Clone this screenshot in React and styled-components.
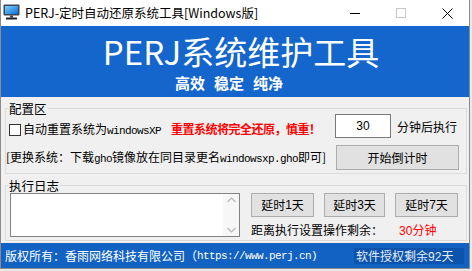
import React from "react";
import styled, { createGlobalStyle } from "styled-components";

const GlobalStyle = createGlobalStyle`
  html, body { margin: 0; padding: 0; background: #e9e9e9; }
  body {
    font-family: "Noto Sans CJK SC", "Noto Sans", sans-serif;
    font-size: 12px;
    color: #000;
  }
  * { box-sizing: border-box; }
`;

const Window = styled.div`
  width: 470px;
  height: 269px;
  border: 1px solid #8c8c8c;
  border-top: none;
  background: #f0f0f0;
  display: flex;
  flex-direction: column;
  overflow: hidden;
`;

const TitleBar = styled.div`
  height: 26px;
  flex: none;
  display: flex;
  align-items: center;
  background: #fff;
  padding-left: 2px;
`;

const TitleIcon = styled.svg`
  width: 17px;
  height: 16px;
  margin-top: -2px;
  flex: none;
`;

const TitleText = styled.span`
  margin-left: 5px;
  font-size: 12.5px;
  line-height: 16px;
  white-space: nowrap;
`;

const Controls = styled.div`
  margin-left: auto;
  margin-right: -1px;
  display: flex;
  height: 100%;
`;

const ControlBtn = styled.div`
  width: 46px;
  height: 26px;
  display: flex;
  align-items: center;
  justify-content: center;
`;

const Header = styled.div`
  height: 71px;
  flex: none;
  background: #1466cc;
  color: #fff;
  display: flex;
  flex-direction: column;
  align-items: center;
`;

const BigTitle = styled.div`
  margin-top: 7px;
  padding-left: 12px;
  font-size: 33px;
  line-height: 36px;
  white-space: nowrap;
`;

const Slogan = styled.div`
  margin-top: 5px;
  padding-right: 12px;
  display: flex;
  gap: 9px;
  font-size: 15px;
  font-weight: 700;
  line-height: 18px;
`;

const Body = styled.div`
  padding: 0 2px 0 4px;
`;

const Group = styled.div`
  position: relative;
  margin-top: 11px;
  height: ${p => p.h}px;
  border: 1px solid #dcdcdc;
  padding: ${p => p.pad};
`;

const Legend = styled.span`
  position: absolute;
  top: -8px;
  left: 2px;
  padding: 0 1px;
  background: #f0f0f0;
  font-size: 12.5px;
  line-height: 15px;
`;

const Row = styled.div`
  display: flex;
  align-items: center;
  height: ${p => p.h}px;
  margin-top: ${p => p.mt || 0}px;
`;

const CheckBox = styled.span`
  width: 12px;
  height: 12px;
  margin: 8px 0 0 3px;
  border: 1px solid #333;
  background: #fff;
  flex: none;
`;

const Label = styled.span`
  line-height: 14px;
  white-space: nowrap;
  margin-top: ${p => p.mt || 0}px;
  margin-left: ${p => p.ml || 0}px;
  color: ${p => p.red ? "#ff0000" : "#000"};
  font-weight: ${p => p.bold ? 700 : 400};
  letter-spacing: ${p => p.bold ? "-0.5px" : "0"};
`;

const Mono = styled.span`
  font-family: "Liberation Mono", monospace;
  font-size: 11px;
  letter-spacing: -0.6px;
`;

const NumberBox = styled.div`
  margin-left: auto;
  width: 56px;
  height: 24px;
  border: 1px solid #7a7a7a;
  background: #fff;
  display: flex;
  align-items: center;
  justify-content: center;
  font-family: "Liberation Sans", Arial, sans-serif;
  font-size: 12px;
`;

const Button = styled.div`
  width: ${p => p.w}px;
  height: ${p => p.h || 24}px;
  margin-left: ${p => p.ml || "0"};
  border: 1px solid #adadad;
  background: #e1e1e1;
  display: flex;
  align-items: center;
  justify-content: center;
  line-height: 14px;
  flex: none;
`;

const LogBox = styled.div`
  width: 230px;
  height: 44px;
  border: 1px solid #828282;
  background: #fff;
  display: flex;
  flex: none;
`;

const LogText = styled.textarea`
  flex: 1;
  border: none;
  outline: none;
  resize: none;
  overflow: hidden;
  background: transparent;
  font: inherit;
`;

const ScrollBar = styled.div`
  width: 16px;
  background: #f7f7f7;
  display: flex;
  flex-direction: column;
  justify-content: space-between;
  align-items: center;
  padding: 3px 0;
`;

const Side = styled.div`
  margin-left: 11px;
  display: flex;
  flex-direction: column;
`;

const ButtonRow = styled.div`
  display: flex;
  gap: 10px;
`;

const CountRow = styled.div`
  display: flex;
  margin-top: 6px;
`;

const Footer = styled.div`
  margin-top: 2px;
  height: 25px;
  flex: none;
  background: #1262c4;
  color: #fff;
  display: flex;
  align-items: center;
  padding-left: 4px;
  white-space: nowrap;
`;

const License = styled.div`
  margin-left: auto;
  margin-right: 5px;
  width: 110px;
  height: 16px;
  line-height: 16px;
  padding-left: 2px;
  background: #0c53ad;
  color: #e6ecf6;
`;

const Digits = styled.span`
  font-family: "Liberation Sans", Arial, sans-serif;
`;

function MonitorIcon() {
  return (
    <TitleIcon viewBox="0 0 17 16">
      <defs>
        <linearGradient id="scr" x1="0" y1="0" x2="1" y2="1">
          <stop offset="0" stopColor="#7fd0ff" />
          <stop offset="1" stopColor="#0a6fd8" />
        </linearGradient>
      </defs>
      <rect x="0.5" y="0.5" width="16" height="11" rx="1" fill="#3d4652" />
      <rect x="2" y="2" width="13" height="8" fill="url(#scr)" />
      <rect x="7" y="11.5" width="3" height="2" fill="#3d4652" />
      <rect x="3" y="13.5" width="11" height="2" rx="0.5" fill="#1f2329" />
    </TitleIcon>
  );
}

function Chevron({ up }) {
  return (
    <svg width="9" height="6" viewBox="0 0 9 6">
      <polyline
        points={up ? "0.5,5 4.5,1 8.5,5" : "0.5,1 4.5,5 8.5,1"}
        fill="none"
        stroke="#b8b8b8"
        strokeWidth="1.2"
      />
    </svg>
  );
}

export default function App() {
  return (
    <>
      <GlobalStyle />
      <Window>
        <TitleBar>
          <MonitorIcon />
          <TitleText>PERJ-定时自动还原系统工具[Windows版]</TitleText>
          <Controls>
            <ControlBtn>
              <svg width="10" height="10" viewBox="0 0 10 10"><line x1="0" y1="5.5" x2="10" y2="5.5" stroke="#000" /></svg>
            </ControlBtn>
            <ControlBtn>
              <svg width="10" height="10" viewBox="0 0 10 10"><rect x="0.5" y="0.5" width="9" height="9" fill="none" stroke="#c8c8c8" /></svg>
            </ControlBtn>
            <ControlBtn>
              <svg width="11" height="11" viewBox="0 0 11 11"><path d="M0.5 0.5 L10.5 10.5 M10.5 0.5 L0.5 10.5" stroke="#000" strokeWidth="1" /></svg>
            </ControlBtn>
          </Controls>
        </TitleBar>

        <Header>
          <BigTitle>PERJ系统维护工具</BigTitle>
          <Slogan>
            <span>高效</span>
            <span>稳定</span>
            <span>纯净</span>
          </Slogan>
        </Header>

        <Body>
          <Group h={66} pad="5px 7px 3px 0">
            <Legend>配置区</Legend>
            <Row h={24}>
              <CheckBox />
              <Label mt={8} ml={2}>自动重置系统为<Mono>windowsXP</Mono></Label>
              <Label mt={6} ml={10} red bold>重置系统将完全还原，慎重！</Label>
              <NumberBox>30</NumberBox>
              <Label mt={2} ml={6} style={{ marginRight: 2 }}>分钟后执行</Label>
            </Row>
            <Row h={25} mt={7}>
              <Label>[更换系统：下载<Mono>gho</Mono>镜像放在同目录更名<Mono>windowsxp.gho</Mono>即可]</Label>
              <Button w={123} h={25} ml="auto">开始倒计时</Button>
            </Row>
          </Group>

          <Group h={56} pad="7px 0 0 4px" style={{ display: "flex" }}>
            <Legend>执行日志</Legend>
            <LogBox>
              <LogText />
              <ScrollBar>
                <Chevron up />
                <Chevron />
              </ScrollBar>
            </LogBox>
            <Side>
              <ButtonRow>
                <Button w={63}>延时<Digits>1</Digits>天</Button>
                <Button w={61}>延时<Digits>3</Digits>天</Button>
                <Button w={63}>延时<Digits>7</Digits>天</Button>
              </ButtonRow>
              <CountRow>
                <Label>距离执行设置操作剩余：</Label>
                <Label ml={16} red><Digits>30</Digits>分钟</Label>
              </CountRow>
            </Side>
          </Group>
        </Body>

        <Footer>
          版权所有：香雨网络科技有限公司（<Mono>https://www.perj.cn)</Mono>
          <License>软件授权剩余<Digits>92</Digits>天</License>
        </Footer>
      </Window>
    </>
  );
}
